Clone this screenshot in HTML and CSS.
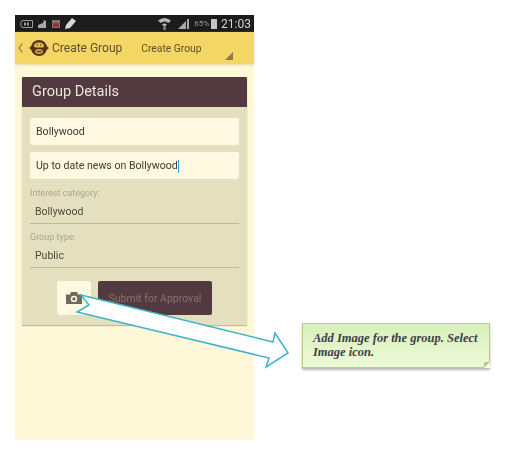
FILE: index.html
```html
<!DOCTYPE html>
<html lang="en">
<head>
    <meta charset="UTF-8">
    <meta name="viewport" content="width=device-width, initial-scale=1.0">
    <title>Create Group</title>
    <link rel="stylesheet" href="styles.css">
</head>
<body>
    <div class="phone">
        <div class="status-bar">
            <div class="status-left">
                <svg width="13" height="8" viewBox="0 0 13 8"><path d="M2 .5h10.500v7H2L.5 4z" fill="none" stroke="#9a9a9a"/><path d="M4 2.500h2v3H4zM7 2.500h2v3H7z" fill="#9a9a9a"/></svg>
                <svg width="9" height="8" viewBox="0 0 9 8"><path d="M0 8V5l5-2 1-3 2 1v7z" fill="#a9a9a9"/></svg>
                <svg width="8" height="8" viewBox="0 0 8 8"><rect width="8" height="8" fill="#777"/><rect x="1" y="3" width="6" height="4" fill="#b3262c"/></svg>
                <svg width="11" height="11" viewBox="0 0 11 11"><path d="M0 11l1-4 6-7 4 3-6 7z" fill="#d8d8d8"/></svg>
            </div>
            <div class="status-right">
                <svg width="13" height="13" viewBox="0 0 13 13"><path d="M0 3.500Q6.500-1.500 13 3.500L10.500 6Q6.500 3 2.500 6zM4 7.500Q6.500 5.500 9 7.500L6.500 10z" fill="#b5b5b5"/><rect x="5" y="10" width="3" height="3" fill="#777"/></svg>
                <svg class="signal" width="11" height="11" viewBox="0 0 11 11"><path d="M0 11L8 3v8zM9 1h2v10H9z" fill="#a9a9a9"/></svg>
                <span class="battery-text">65%</span>
                <span class="battery"></span>
                <span class="clock">21:03</span>
            </div>
        </div>
        <div class="app-bar">
            <svg class="back" width="5" height="10" viewBox="0 0 5 10"><path d="M4.500.5L1 5l3.500 4.500" fill="none" stroke="#8a7a4a" stroke-width="1.200"/></svg>
            <svg class="logo" width="20" height="16" viewBox="0 0 20 16">
                <path d="M0 8l4-3h12l4 3-4 3H4z" fill="#5a3213"/>
                <circle cx="10" cy="8" r="8" fill="#5a3213"/>
                <path d="M5 6Q5 2.500 10 2.500T15 6Q15 7.500 13 7.500H7Q5 7.500 5 6z" fill="#e2bd5c"/>
                <ellipse cx="10" cy="11.500" rx="4" ry="2.500" fill="#c79a4c"/>
                <path d="M7.500 5h1.500M11 5h1.500M8 11.500h4" stroke="#5a3213"/>
            </svg>
            <span class="app-title">Create Group</span>
            <span class="app-spinner">Create Group</span>
            <span class="spinner-corner"></span>
        </div>
        <div class="content">
            <div class="card">
                <div class="card-header">Group Details</div>
                <div class="card-body">
                    <div class="field">Bollywood</div>
                    <div class="field">Up to date news on Bollywood<span class="cursor"></span></div>
                    <label class="select-label first">Interest category:</label>
                    <div class="select-value">Bollywood</div>
                    <label class="select-label">Group type:</label>
                    <div class="select-value">Public</div>
                    <div class="actions">
                        <button class="camera-btn">
                            <svg width="16" height="12" viewBox="0 0 16 12"><path fill-rule="evenodd" d="M0 2.500h4L5 0h6l1 2.500h4V12H0zM8 3.700a3.200 3.200 0 1 0 0 6.400 3.200 3.200 0 0 0 0-6.400zM8 5.200a1.700 1.700 0 1 1 0 3.400 1.700 1.700 0 0 1 0-3.400z" fill="#6f6a60"/></svg>
                        </button>
                        <button class="submit-btn">Submit for Approval</button>
                    </div>
                </div>
            </div>
        </div>
    </div>

    <svg class="arrow" width="528" height="456" viewBox="0 0 528 456">
        <path d="M81 295L273 342L275 333L288 353L266 367L269 358L77 312L89 305z" fill="#fff" stroke="#3fb3cc" stroke-width="1.500"/>
    </svg>

    <div class="note">
        Add Image for the group. Select Image icon.
        <span class="note-fold"></span>
    </div>
</body>
</html>
```

FILE: styles.css
```css
* {
    margin: 0;
    padding: 0;
    box-sizing: border-box;
}

body {
    background: #fff;
    font-family: Roboto, "Liberation Sans", sans-serif;
    width: 528px;
    height: 456px;
    overflow: hidden;
    position: relative;
    padding: 15px 0 0 15px;
}

.phone {
    width: 239px;
    height: 425px;
    display: flex;
    flex-direction: column;
    background: #fef8d9;
    filter: blur(0.35px);
}

.status-bar {
    height: 17px;
    background: #1c1c1c;
    display: flex;
    justify-content: space-between;
    align-items: center;
    padding: 0 3px 0 5px;
}

.status-left {
    display: flex;
    align-items: center;
    gap: 5px;
}

.status-right {
    display: flex;
    align-items: center;
}

.signal {
    margin-left: 7px;
}

.battery-text {
    font-size: 8px;
    color: #9a9a9a;
    margin-left: 5px;
}

.battery {
    width: 6px;
    height: 10px;
    background: #c4c4c4;
    margin-left: 2px;
}

.clock {
    font-size: 12px;
    color: #d4d4d4;
    margin-left: 4px;
}

.app-bar {
    height: 32px;
    background: #f3d663;
    display: flex;
    align-items: center;
    position: relative;
    padding-left: 3px;
    box-shadow: 0 1px 2px #e4d9a0;
}

.logo {
    margin-left: 6px;
}

.app-title {
    font-size: 12px;
    color: #5d4e2c;
    margin-left: 3px;
}

.app-spinner {
    font-size: 10.300px;
    color: #5d4e2c;
    margin-left: 19px;
}

.spinner-corner {
    position: absolute;
    right: 21px;
    bottom: 4px;
    border-style: solid;
    border-width: 0 0 8px 8px;
    border-color: transparent transparent #8a7d48 transparent;
}

.content {
    flex: 1;
    padding: 13px 7px 0;
}

.card {
    background: #e4dfbe;
    box-shadow: 0 1px 1px #c2bc9a;
}

.card-header {
    height: 30px;
    line-height: 30px;
    padding-left: 10px;
    background: #533a40;
    color: #ece4d8;
    font-size: 14.500px;
    border-radius: 1px 1px 0 0;
}

.card-body {
    padding: 11px 8px 10px;
}

.field {
    height: 27px;
    line-height: 27px;
    background: #fef9e0;
    border-radius: 2px;
    padding-left: 6px;
    margin-bottom: 7px;
    font-size: 10.600px;
    color: #3a3a32;
}

.cursor {
    display: inline-block;
    width: 1px;
    height: 13px;
    background: #3b9fd8;
    vertical-align: middle;
}

.select-label {
    display: block;
    font-size: 9px;
    line-height: 10px;
    color: #aaa690;
    margin-top: 8px;
}

.select-label.first {
    margin-top: 9px;
}

.select-value {
    height: 25px;
    line-height: 26px;
    padding-left: 5px;
    font-size: 10.500px;
    color: #4d4a3c;
    border-bottom: 1px solid #bdb897;
    margin-top: 1px;
}

.actions {
    display: flex;
    justify-content: center;
    gap: 7px;
    margin-top: 13px;
}

button {
    height: 34px;
    border: none;
    border-radius: 2px;
    font-family: inherit;
}

.camera-btn {
    width: 34px;
    background: #fef9e0;
    display: flex;
    align-items: center;
    justify-content: center;
}

.submit-btn {
    width: 114px;
    background: #533a40;
    color: #85746c;
    font-size: 10.500px;
}

.arrow {
    position: absolute;
    left: 0;
    top: 0;
}

.note {
    position: absolute;
    left: 302px;
    top: 323px;
    width: 188px;
    height: 45px;
    padding: 8px 4px 0 10px;
    background: linear-gradient(#d8f0b8, #eefad8);
    border: 1px solid #b5cf85;
    box-shadow: 0 2px 2px #b8b8b8;
    font-family: "Liberation Serif", serif;
    font-style: italic;
    font-weight: bold;
    font-size: 12.500px;
    line-height: 13.500px;
    color: #3c4048;
}

.note-fold {
    position: absolute;
    right: -1px;
    bottom: -1px;
    border-style: solid;
    border-width: 6px 6px 0 0;
    border-color: #b5cf85 #fff transparent transparent;
}
```
